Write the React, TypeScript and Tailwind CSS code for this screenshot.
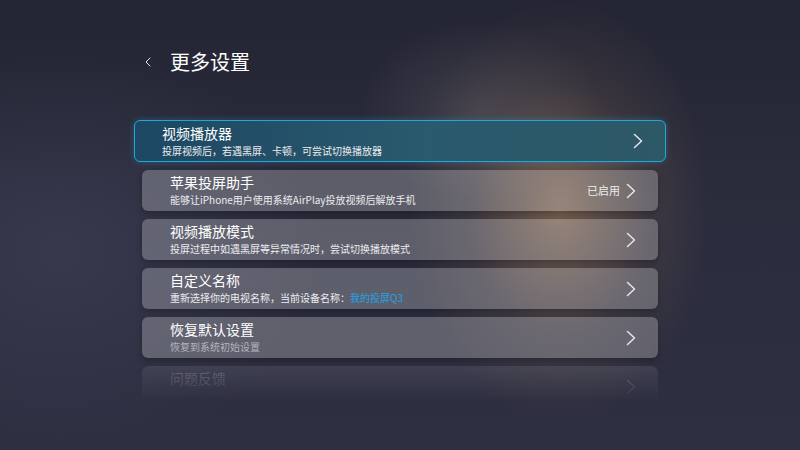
import { ChevronLeft } from 'lucide-react'

type Item = {
  title: string
  desc: React.ReactNode
  status?: string
  dim?: boolean
}

const items: Item[] = [
  { title: '苹果投屏助手', desc: '能够让iPhone用户使用系统AirPlay投放视频后解放手机', status: '已启用' },
  { title: '视频播放模式', desc: '投屏过程中如遇黑屏等异常情况时，尝试切换播放模式' },
  {
    title: '自定义名称',
    desc: (
      <>
        重新选择你的电视名称，当前设备名称：<span className="text-[#22a3e6]">我的投屏Q3</span>
      </>
    ),
  },
  { title: '恢复默认设置', desc: '恢复到系统初始设置', dim: true },
]

function Arrow({ className = '' }: { className?: string }) {
  return (
    <svg width="10" height="16" viewBox="0 0 10 16" fill="none" className={className}>
      <path d="M1.5 1.5 L8.5 8 L1.5 14.5" stroke="currentColor" strokeWidth="1.5" strokeLinecap="round" strokeLinejoin="round" />
    </svg>
  )
}

function Row({ item }: { item: Item }) {
  return (
    <div className="mx-2 flex h-[41px] items-center rounded-[6px] bg-white/[0.24] pl-7 pr-[22px] shadow-[0_3px_6px_rgba(0,0,0,0.25)]">
      <div className="flex-1">
        <p className="text-[14px] leading-[19px] text-white">{item.title}</p>
        <p className={`text-[10px] leading-[16px] ${item.dim ? 'text-[#b4b4bc]' : 'text-[#ececf0]'}`}>{item.desc}</p>
      </div>
      {item.status && <span className="mr-[6px] text-[11px] leading-none text-[#ececf0]">{item.status}</span>}
      <Arrow className="text-[#e6e6ea]" />
    </div>
  )
}

export default function App() {
  return (
    <div className="relative h-[450px] w-[800px] overflow-hidden bg-[#2a2b3b] font-['Noto_Sans_CJK_SC','Noto_Sans',sans-serif]">
      {/* background glows */}
      <div className="pointer-events-none absolute inset-0 bg-[radial-gradient(ellipse_150px_210px_at_560px_210px,rgba(185,140,95,0.55),rgba(130,105,85,0.22)_60%,transparent_100%)]" />
      <div className="pointer-events-none absolute inset-0 bg-[radial-gradient(ellipse_120px_90px_at_480px_110px,rgba(150,140,140,0.25),transparent_100%)]" />
      <div className="pointer-events-none absolute inset-0 bg-[radial-gradient(ellipse_260px_200px_at_60px_250px,rgba(80,82,110,0.35),transparent_100%)]" />
      <div className="pointer-events-none absolute inset-0 bg-[linear-gradient(180deg,rgba(20,20,30,0.25),transparent_40%,rgba(60,60,85,0.25))]" />

      <div className="relative flex flex-col px-[134px] pt-[49px]">
        <div className="flex h-[26px] items-center">
          <ChevronLeft size={16} strokeWidth={1.5} className="ml-[6px] text-[#e6e6ea]" />
          <h1 className="ml-[14px] text-[20px] leading-[26px] text-white">更多设置</h1>
        </div>

        <div className="mt-[45px] flex w-[532px] flex-col gap-2">
          <div className="flex h-[42px] items-center rounded-[6px] border-[1.5px] border-[#26a6d6] bg-[linear-gradient(90deg,#1d4762,#2a5a6e_55%,#2d5866)] pl-[27px] pr-[22px] shadow-[0_0_6px_rgba(38,166,214,0.35)]">
            <div className="flex-1">
              <p className="text-[14px] leading-[19px] text-white">视频播放器</p>
              <p className="text-[10px] leading-[16px] text-[#ececf0]">投屏视频后，若遇黑屏、卡顿，可尝试切换播放器</p>
            </div>
            <Arrow className="text-[#e6e6ea]" />
          </div>

          {items.map((it) => (
            <Row key={it.title} item={it} />
          ))}

          <div className="mx-2 flex h-[41px] items-center rounded-[6px] bg-white/[0.14] pl-7 pr-[22px] opacity-60 [mask-image:linear-gradient(180deg,black,transparent_85%)]">
            <div className="flex-1">
              <p className="text-[14px] leading-[19px] text-white/40">问题反馈</p>
              <p className="text-[10px] leading-[16px] text-transparent">&nbsp;</p>
            </div>
            <Arrow className="text-white/40" />
          </div>
        </div>
      </div>
    </div>
  )
}
